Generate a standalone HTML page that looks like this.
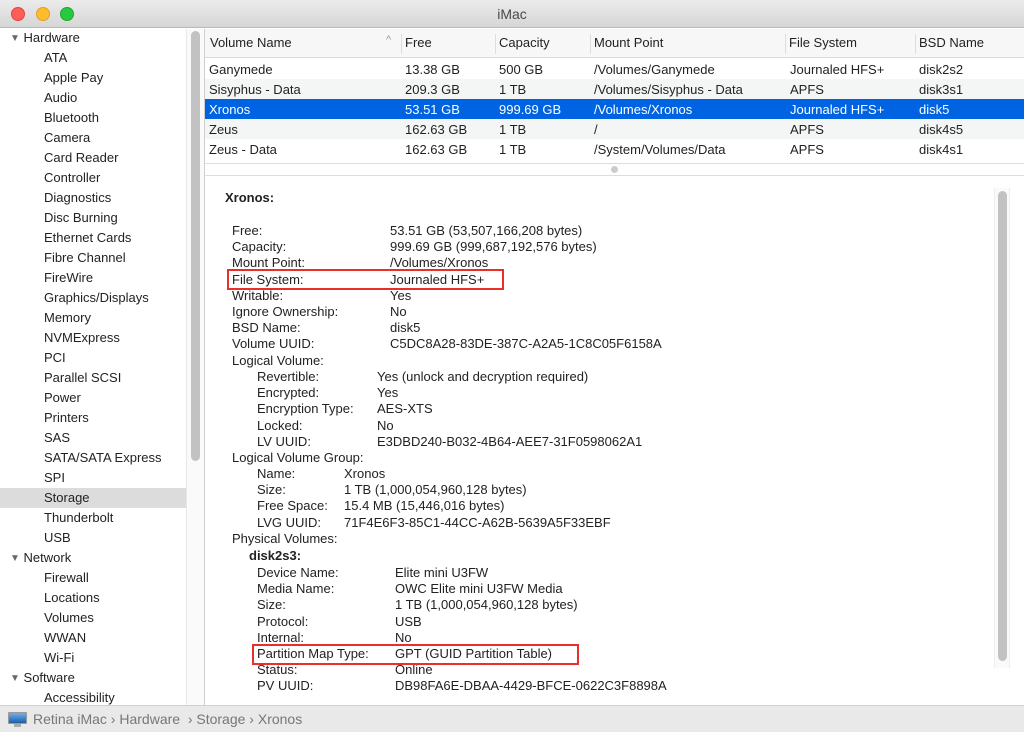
<!DOCTYPE html><html><head><style>
*{margin:0;padding:0;box-sizing:border-box}
body{width:1024px;height:732px;overflow:hidden;font-family:"Liberation Sans",sans-serif;font-size:13px;color:#222;background:#fff;position:relative}
.a{position:absolute;white-space:nowrap}
.t{line-height:16.2px}
.sb{line-height:20px}
.sb div{height:20px;line-height:20px;overflow:hidden}
.tri{display:inline-block;font-size:10px;color:#666;line-height:10px;vertical-align:1px}
</style></head><body>
<div class="a" style="left:0;top:0;width:1024px;height:28px;background:linear-gradient(#ebebeb,#d6d6d6);border-bottom:1px solid #b9b9b9"></div>
<div class="a" style="left:11px;top:7px;width:14px;height:14px;border-radius:7px;background:#fd5f57;border:1px solid #e0443e"></div>
<div class="a" style="left:36px;top:7px;width:14px;height:14px;border-radius:7px;background:#febc2e;border:1px solid #dea123"></div>
<div class="a" style="left:60px;top:7px;width:14px;height:14px;border-radius:7px;background:#28c840;border:1px solid #1aab29"></div>
<div class="a" style="left:0;width:1024px;top:6px;text-align:center;font-size:14px;color:#4a4a4a">iMac</div>
<!-- sidebar -->
<div class="a" style="left:186px;top:29px;width:18px;height:676px;background:#fafafa;border-left:1px solid #e8e8e8"></div>
<div class="a" style="left:191px;top:31px;width:9px;height:430px;border-radius:5px;background:#c2c2c2"></div>
<div class="a" style="left:204px;top:29px;width:1px;height:676px;background:#cfcfcf"></div>
<div class="a" style="left:0;top:488px;width:186px;height:20px;background:#dcdcdc"></div>
<div class="a sb" style="left:0;top:28px;color:#222">
<div style="padding-left:10px"><span class="tri">▼</span> Hardware</div>
<div style="padding-left:44px">ATA</div><div style="padding-left:44px">Apple Pay</div><div style="padding-left:44px">Audio</div><div style="padding-left:44px">Bluetooth</div><div style="padding-left:44px">Camera</div><div style="padding-left:44px">Card Reader</div><div style="padding-left:44px">Controller</div><div style="padding-left:44px">Diagnostics</div><div style="padding-left:44px">Disc Burning</div><div style="padding-left:44px">Ethernet Cards</div><div style="padding-left:44px">Fibre Channel</div><div style="padding-left:44px">FireWire</div><div style="padding-left:44px">Graphics/Displays</div><div style="padding-left:44px">Memory</div><div style="padding-left:44px">NVMExpress</div><div style="padding-left:44px">PCI</div><div style="padding-left:44px">Parallel SCSI</div><div style="padding-left:44px">Power</div><div style="padding-left:44px">Printers</div><div style="padding-left:44px">SAS</div><div style="padding-left:44px">SATA/SATA Express</div><div style="padding-left:44px">SPI</div><div style="padding-left:44px">Storage</div><div style="padding-left:44px">Thunderbolt</div><div style="padding-left:44px">USB</div>
<div style="padding-left:10px"><span class="tri">▼</span> Network</div>
<div style="padding-left:44px">Firewall</div><div style="padding-left:44px">Locations</div><div style="padding-left:44px">Volumes</div><div style="padding-left:44px">WWAN</div><div style="padding-left:44px">Wi-Fi</div>
<div style="padding-left:10px"><span class="tri">▼</span> Software</div>
<div style="padding-left:44px">Accessibility</div>
</div>
<!-- table -->
<div class="a" style="left:205px;top:29px;width:819px;height:29px;background:#f7f7f7;border-bottom:1px solid #dcdcdc"></div>
<div class="a" style="left:205px;top:79px;width:819px;height:20px;background:#f4f5f5"></div>
<div class="a" style="left:205px;top:99px;width:819px;height:20px;background:#0063e1"></div>
<div class="a" style="left:205px;top:119px;width:819px;height:20px;background:#f4f5f5"></div>
<div class="a" style="left:401px;top:34px;width:1px;height:20px;background:#ddd"></div>
<div class="a" style="left:495px;top:34px;width:1px;height:20px;background:#ddd"></div>
<div class="a" style="left:590px;top:34px;width:1px;height:20px;background:#ddd"></div>
<div class="a" style="left:785px;top:34px;width:1px;height:20px;background:#ddd"></div>
<div class="a" style="left:915px;top:34px;width:1px;height:20px;background:#ddd"></div>
<div class="a" style="top:35px;left:210px">Volume Name</div><div class="a" style="top:34px;left:386px;font-size:11px;color:#999">^</div>
<div class="a" style="top:35px;left:405px">Free</div><div class="a" style="top:35px;left:499px">Capacity</div><div class="a" style="top:35px;left:594px">Mount Point</div><div class="a" style="top:35px;left:789px">File System</div><div class="a" style="top:35px;left:919px">BSD Name</div>
<div class="a sb" style="top:60px;left:209px">Ganymede<br>Sisyphus - Data<br><span style="color:#fff">Xronos</span><br>Zeus<br>Zeus - Data</div>
<div class="a sb" style="top:60px;left:405px">13.38 GB<br>209.3 GB<br><span style="color:#fff">53.51 GB</span><br>162.63 GB<br>162.63 GB</div>
<div class="a sb" style="top:60px;left:499px">500 GB<br>1 TB<br><span style="color:#fff">999.69 GB</span><br>1 TB<br>1 TB</div>
<div class="a sb" style="top:60px;left:594px">/Volumes/Ganymede<br>/Volumes/Sisyphus - Data<br><span style="color:#fff">/Volumes/Xronos</span><br>/<br>/System/Volumes/Data</div>
<div class="a sb" style="top:60px;left:790px">Journaled HFS+<br>APFS<br><span style="color:#fff">Journaled HFS+</span><br>APFS<br>APFS</div>
<div class="a sb" style="top:60px;left:919px">disk2s2<br>disk3s1<br><span style="color:#fff">disk5</span><br>disk4s5<br>disk4s1</div>
<div class="a" style="left:205px;top:163px;width:819px;height:1px;background:#ddd"></div>
<div class="a" style="left:611px;top:166px;width:7px;height:7px;border-radius:4px;background:#ccc"></div>
<div class="a" style="left:205px;top:175px;width:819px;height:1px;background:#ddd"></div>
<!-- detail scrollbar -->
<div class="a" style="left:994px;top:188px;width:16px;height:480px;border-left:1px solid #eee;border-right:1px solid #eee;background:#fafafa"></div>
<div class="a" style="left:998px;top:191px;width:9px;height:470px;border-radius:5px;background:#c2c2c2"></div>
<!-- detail -->
<div class="a" style="left:225px;top:190px;font-weight:bold">Xronos:</div>
<div class="a t" style="left:232px;top:223px">Free:<br>Capacity:<br>Mount Point:<br>File System:<br>Writable:<br>Ignore Ownership:<br>BSD Name:<br>Volume UUID:<br>Logical Volume:</div>
<div class="a t" style="left:390px;top:223px">53.51 GB (53,507,166,208 bytes)<br>999.69 GB (999,687,192,576 bytes)<br>/Volumes/Xronos<br>Journaled HFS+<br>Yes<br>No<br>disk5<br>C5DC8A28-83DE-387C-A2A5-1C8C05F6158A</div>
<div class="a t" style="left:257px;top:369px">Revertible:<br>Encrypted:<br>Encryption Type:<br>Locked:<br>LV UUID:</div>
<div class="a t" style="left:377px;top:369px">Yes (unlock and decryption required)<br>Yes<br>AES-XTS<br>No<br>E3DBD240-B032-4B64-AEE7-31F0598062A1</div>
<div class="a t" style="left:232px;top:450px">Logical Volume Group:</div>
<div class="a t" style="left:257px;top:466px">Name:<br>Size:<br>Free Space:<br>LVG UUID:</div>
<div class="a t" style="left:344px;top:466px">Xronos<br>1 TB (1,000,054,960,128 bytes)<br>15.4 MB (15,446,016 bytes)<br>71F4E6F3-85C1-44CC-A62B-5639A5F33EBF</div>
<div class="a t" style="left:232px;top:531px">Physical Volumes:</div>
<div class="a t" style="left:249px;top:548px;font-weight:bold">disk2s3:</div>
<div class="a t" style="left:257px;top:565px">Device Name:<br>Media Name:<br>Size:<br>Protocol:<br>Internal:<br>Partition Map Type:<br>Status:<br>PV UUID:</div>
<div class="a t" style="left:395px;top:565px">Elite mini U3FW<br>OWC Elite mini U3FW Media<br>1 TB (1,000,054,960,128 bytes)<br>USB<br>No<br>GPT (GUID Partition Table)<br>Online<br>DB98FA6E-DBAA-4429-BFCE-0622C3F8898A</div>
<div class="a" style="left:227px;top:269px;width:277px;height:21px;border:2px solid #e8302a"></div>
<div class="a" style="left:252px;top:644px;width:327px;height:21px;border:2px solid #e8302a"></div>
<!-- status bar -->
<div class="a" style="left:0;top:705px;width:1024px;height:27px;background:#e9e9e9;border-top:1px solid #d0d0d0"></div>
<div class="a" style="left:8px;top:712px;width:19px;height:12px;background:linear-gradient(#6fb0ea,#1d5fa8);border:1px solid #999;border-radius:1px"></div>
<div class="a" style="left:14px;top:724px;width:7px;height:3px;background:#aaa"></div>
<div class="a" style="left:33px;top:711px;color:#777;font-size:14px">Retina iMac › Hardware &nbsp;› Storage › Xronos</div>
</body></html>
